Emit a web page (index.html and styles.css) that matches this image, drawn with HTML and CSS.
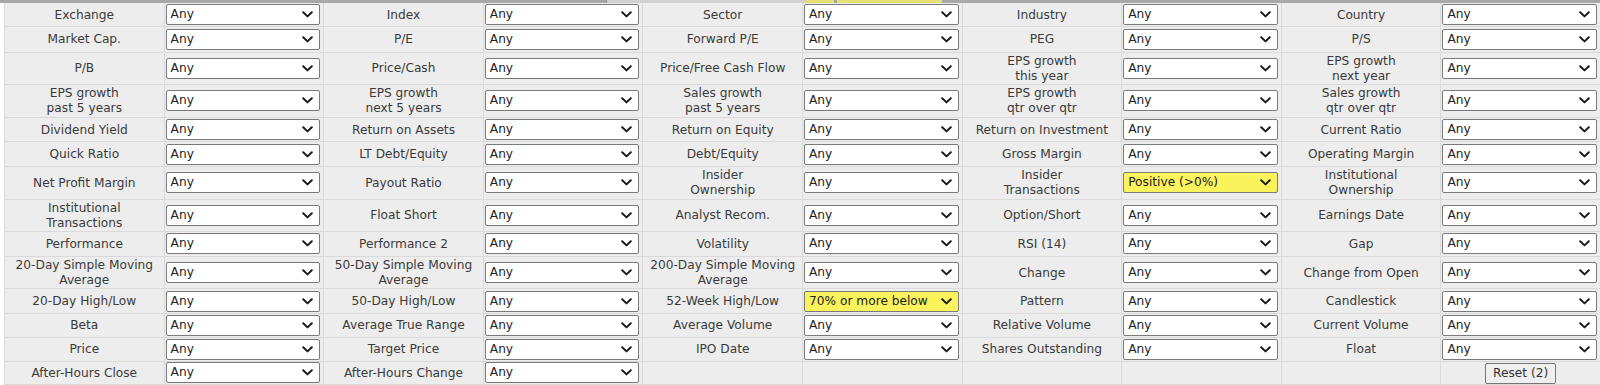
FILE: index.html
```html
<!DOCTYPE html>
<html>
<head>
<meta charset="utf-8">
<link rel="stylesheet" href="styles.css">
</head>
<body>
<svg width="0" height="0" class="defs" aria-hidden="true">
  <defs>
    <symbol id="chev" viewBox="0 0 11 7">
      <path d="M1.2 1.3 L5.5 5.4 L9.8 1.3" fill="none" stroke="#1a1a1a" stroke-width="2" stroke-linecap="round" stroke-linejoin="round"/>
    </symbol>
  </defs>
</svg>
<div class="tabs-edge">
  <div class="seg seg-a"></div>
  <div class="seg seg-b"></div>
  <div class="seg seg-c"></div>
  <div class="seg seg-d"></div>
  <div class="seg seg-e"></div>
</div>
<div class="filters">
  <div class="lbl">Exchange</div><div class="sel"><div class="dd"><span>Any</span><svg class="chev"><use href="#chev"/></svg></div></div>
  <div class="lbl">Index</div><div class="sel"><div class="dd"><span>Any</span><svg class="chev"><use href="#chev"/></svg></div></div>
  <div class="lbl">Sector</div><div class="sel"><div class="dd"><span>Any</span><svg class="chev"><use href="#chev"/></svg></div></div>
  <div class="lbl">Industry</div><div class="sel"><div class="dd"><span>Any</span><svg class="chev"><use href="#chev"/></svg></div></div>
  <div class="lbl">Country</div><div class="sel"><div class="dd"><span>Any</span><svg class="chev"><use href="#chev"/></svg></div></div>

  <div class="lbl">Market Cap.</div><div class="sel"><div class="dd"><span>Any</span><svg class="chev"><use href="#chev"/></svg></div></div>
  <div class="lbl">P/E</div><div class="sel"><div class="dd"><span>Any</span><svg class="chev"><use href="#chev"/></svg></div></div>
  <div class="lbl">Forward P/E</div><div class="sel"><div class="dd"><span>Any</span><svg class="chev"><use href="#chev"/></svg></div></div>
  <div class="lbl">PEG</div><div class="sel"><div class="dd"><span>Any</span><svg class="chev"><use href="#chev"/></svg></div></div>
  <div class="lbl">P/S</div><div class="sel"><div class="dd"><span>Any</span><svg class="chev"><use href="#chev"/></svg></div></div>

  <div class="lbl">P/B</div><div class="sel"><div class="dd"><span>Any</span><svg class="chev"><use href="#chev"/></svg></div></div>
  <div class="lbl">Price/Cash</div><div class="sel"><div class="dd"><span>Any</span><svg class="chev"><use href="#chev"/></svg></div></div>
  <div class="lbl">Price/Free Cash Flow</div><div class="sel"><div class="dd"><span>Any</span><svg class="chev"><use href="#chev"/></svg></div></div>
  <div class="lbl">EPS growth<br>this year</div><div class="sel"><div class="dd"><span>Any</span><svg class="chev"><use href="#chev"/></svg></div></div>
  <div class="lbl">EPS growth<br>next year</div><div class="sel"><div class="dd"><span>Any</span><svg class="chev"><use href="#chev"/></svg></div></div>

  <div class="lbl">EPS growth<br>past 5 years</div><div class="sel"><div class="dd"><span>Any</span><svg class="chev"><use href="#chev"/></svg></div></div>
  <div class="lbl">EPS growth<br>next 5 years</div><div class="sel"><div class="dd"><span>Any</span><svg class="chev"><use href="#chev"/></svg></div></div>
  <div class="lbl">Sales growth<br>past 5 years</div><div class="sel"><div class="dd"><span>Any</span><svg class="chev"><use href="#chev"/></svg></div></div>
  <div class="lbl">EPS growth<br>qtr over qtr</div><div class="sel"><div class="dd"><span>Any</span><svg class="chev"><use href="#chev"/></svg></div></div>
  <div class="lbl">Sales growth<br>qtr over qtr</div><div class="sel"><div class="dd"><span>Any</span><svg class="chev"><use href="#chev"/></svg></div></div>

  <div class="lbl">Dividend Yield</div><div class="sel"><div class="dd"><span>Any</span><svg class="chev"><use href="#chev"/></svg></div></div>
  <div class="lbl">Return on Assets</div><div class="sel"><div class="dd"><span>Any</span><svg class="chev"><use href="#chev"/></svg></div></div>
  <div class="lbl">Return on Equity</div><div class="sel"><div class="dd"><span>Any</span><svg class="chev"><use href="#chev"/></svg></div></div>
  <div class="lbl">Return on Investment</div><div class="sel"><div class="dd"><span>Any</span><svg class="chev"><use href="#chev"/></svg></div></div>
  <div class="lbl">Current Ratio</div><div class="sel"><div class="dd"><span>Any</span><svg class="chev"><use href="#chev"/></svg></div></div>

  <div class="lbl">Quick Ratio</div><div class="sel"><div class="dd"><span>Any</span><svg class="chev"><use href="#chev"/></svg></div></div>
  <div class="lbl">LT Debt/Equity</div><div class="sel"><div class="dd"><span>Any</span><svg class="chev"><use href="#chev"/></svg></div></div>
  <div class="lbl">Debt/Equity</div><div class="sel"><div class="dd"><span>Any</span><svg class="chev"><use href="#chev"/></svg></div></div>
  <div class="lbl">Gross Margin</div><div class="sel"><div class="dd"><span>Any</span><svg class="chev"><use href="#chev"/></svg></div></div>
  <div class="lbl">Operating Margin</div><div class="sel"><div class="dd"><span>Any</span><svg class="chev"><use href="#chev"/></svg></div></div>

  <div class="lbl">Net Profit Margin</div><div class="sel"><div class="dd"><span>Any</span><svg class="chev"><use href="#chev"/></svg></div></div>
  <div class="lbl">Payout Ratio</div><div class="sel"><div class="dd"><span>Any</span><svg class="chev"><use href="#chev"/></svg></div></div>
  <div class="lbl">Insider<br>Ownership</div><div class="sel"><div class="dd"><span>Any</span><svg class="chev"><use href="#chev"/></svg></div></div>
  <div class="lbl">Insider<br>Transactions</div><div class="sel"><div class="dd active"><span>Positive (&gt;0%)</span><svg class="chev"><use href="#chev"/></svg></div></div>
  <div class="lbl">Institutional<br>Ownership</div><div class="sel"><div class="dd"><span>Any</span><svg class="chev"><use href="#chev"/></svg></div></div>

  <div class="lbl">Institutional<br>Transactions</div><div class="sel"><div class="dd"><span>Any</span><svg class="chev"><use href="#chev"/></svg></div></div>
  <div class="lbl">Float Short</div><div class="sel"><div class="dd"><span>Any</span><svg class="chev"><use href="#chev"/></svg></div></div>
  <div class="lbl">Analyst Recom.</div><div class="sel"><div class="dd"><span>Any</span><svg class="chev"><use href="#chev"/></svg></div></div>
  <div class="lbl">Option/Short</div><div class="sel"><div class="dd"><span>Any</span><svg class="chev"><use href="#chev"/></svg></div></div>
  <div class="lbl">Earnings Date</div><div class="sel"><div class="dd"><span>Any</span><svg class="chev"><use href="#chev"/></svg></div></div>

  <div class="lbl">Performance</div><div class="sel"><div class="dd"><span>Any</span><svg class="chev"><use href="#chev"/></svg></div></div>
  <div class="lbl">Performance 2</div><div class="sel"><div class="dd"><span>Any</span><svg class="chev"><use href="#chev"/></svg></div></div>
  <div class="lbl">Volatility</div><div class="sel"><div class="dd"><span>Any</span><svg class="chev"><use href="#chev"/></svg></div></div>
  <div class="lbl">RSI (14)</div><div class="sel"><div class="dd"><span>Any</span><svg class="chev"><use href="#chev"/></svg></div></div>
  <div class="lbl">Gap</div><div class="sel"><div class="dd"><span>Any</span><svg class="chev"><use href="#chev"/></svg></div></div>

  <div class="lbl">20-Day Simple Moving<br>Average</div><div class="sel"><div class="dd"><span>Any</span><svg class="chev"><use href="#chev"/></svg></div></div>
  <div class="lbl">50-Day Simple Moving<br>Average</div><div class="sel"><div class="dd"><span>Any</span><svg class="chev"><use href="#chev"/></svg></div></div>
  <div class="lbl">200-Day Simple Moving<br>Average</div><div class="sel"><div class="dd"><span>Any</span><svg class="chev"><use href="#chev"/></svg></div></div>
  <div class="lbl">Change</div><div class="sel"><div class="dd"><span>Any</span><svg class="chev"><use href="#chev"/></svg></div></div>
  <div class="lbl">Change from Open</div><div class="sel"><div class="dd"><span>Any</span><svg class="chev"><use href="#chev"/></svg></div></div>

  <div class="lbl">20-Day High/Low</div><div class="sel"><div class="dd"><span>Any</span><svg class="chev"><use href="#chev"/></svg></div></div>
  <div class="lbl">50-Day High/Low</div><div class="sel"><div class="dd"><span>Any</span><svg class="chev"><use href="#chev"/></svg></div></div>
  <div class="lbl">52-Week High/Low</div><div class="sel"><div class="dd active"><span>70% or more below</span><svg class="chev"><use href="#chev"/></svg></div></div>
  <div class="lbl">Pattern</div><div class="sel"><div class="dd"><span>Any</span><svg class="chev"><use href="#chev"/></svg></div></div>
  <div class="lbl">Candlestick</div><div class="sel"><div class="dd"><span>Any</span><svg class="chev"><use href="#chev"/></svg></div></div>

  <div class="lbl">Beta</div><div class="sel"><div class="dd"><span>Any</span><svg class="chev"><use href="#chev"/></svg></div></div>
  <div class="lbl">Average True Range</div><div class="sel"><div class="dd"><span>Any</span><svg class="chev"><use href="#chev"/></svg></div></div>
  <div class="lbl">Average Volume</div><div class="sel"><div class="dd"><span>Any</span><svg class="chev"><use href="#chev"/></svg></div></div>
  <div class="lbl">Relative Volume</div><div class="sel"><div class="dd"><span>Any</span><svg class="chev"><use href="#chev"/></svg></div></div>
  <div class="lbl">Current Volume</div><div class="sel"><div class="dd"><span>Any</span><svg class="chev"><use href="#chev"/></svg></div></div>

  <div class="lbl">Price</div><div class="sel"><div class="dd"><span>Any</span><svg class="chev"><use href="#chev"/></svg></div></div>
  <div class="lbl">Target Price</div><div class="sel"><div class="dd"><span>Any</span><svg class="chev"><use href="#chev"/></svg></div></div>
  <div class="lbl">IPO Date</div><div class="sel"><div class="dd"><span>Any</span><svg class="chev"><use href="#chev"/></svg></div></div>
  <div class="lbl">Shares Outstanding</div><div class="sel"><div class="dd"><span>Any</span><svg class="chev"><use href="#chev"/></svg></div></div>
  <div class="lbl">Float</div><div class="sel"><div class="dd"><span>Any</span><svg class="chev"><use href="#chev"/></svg></div></div>

  <div class="lbl">After-Hours Close</div><div class="sel"><div class="dd"><span>Any</span><svg class="chev"><use href="#chev"/></svg></div></div>
  <div class="lbl">After-Hours Change</div><div class="sel"><div class="dd"><span>Any</span><svg class="chev"><use href="#chev"/></svg></div></div>
  <div class="lbl"></div><div class="sel"></div>
  <div class="lbl"></div><div class="sel"></div>
  <div class="lbl"></div><div class="sel center"><button class="reset">Reset (2)</button></div>
</div>
</body>
</html>
```

FILE: styles.css
```css
html, body {
  margin: 0;
  padding: 0;
  background: #ffffff;
}

body {
  width: 1600px;
  height: 385px;
  overflow: hidden;
  font-family: "DejaVu Sans", Verdana, sans-serif;
  font-size: 12.2px;
  color: #333333;
}

.defs {
  display: block;
  width: 0;
  height: 0;
  overflow: hidden;
}

.tabs-edge {
  display: flex;
  height: 3px;
  background: #a8a8a8;
}

.seg { height: 3px; }
.seg-a { width: 606px; }
.seg-b { width: 199px; background: #d2d2d2; border-left: 1px solid #8c8c8c; }
.seg-c { width: 28px; background: #e6df72; }
.seg-d { width: 105px; background: #e6df72; margin-left: 3px; }
.seg-e { flex: 1; }

.filters {
  display: grid;
  grid-template-columns: repeat(10, 1fr);
  grid-template-rows: 23px 24.6px 31.6px 31.6px 23.6px 23.6px 31.6px 31.6px 23.6px 31.6px 23.6px 22.8px 22.8px 22.8px;
  column-gap: 1px;
  row-gap: 1px;
  margin-left: 4px;
  padding: 0 0 1px 1px;
  background: #dadada;
}

.lbl {
  background: #ededed;
  display: flex;
  align-items: center;
  justify-content: center;
  text-align: center;
  line-height: 15px;
  padding-top: 1px;
  color: #3a3a3a;
}

.sel {
  background: #ededed;
  display: flex;
  align-items: center;
  padding: 0 3px 0 1px;
  min-width: 0;
}

.sel.center {
  justify-content: center;
  padding: 0;
}

.dd {
  flex: 1;
  display: flex;
  align-items: center;
  justify-content: space-between;
  height: 21px;
  box-sizing: border-box;
  padding: 0 6px 0 4px;
  background: #ffffff;
  border: 1px solid #7a7a7a;
  border-radius: 2px;
  color: #222222;
  white-space: nowrap;
}

.dd.active {
  background: #fbf35c;
}

.dd span {
  line-height: 19px;
}

.chev {
  width: 11px;
  height: 7px;
  flex: none;
}

.reset {
  height: 21px;
  padding: 0 7px;
  font-family: "DejaVu Sans", Verdana, sans-serif;
  font-size: 12.2px;
  color: #333333;
  background: #efefef;
  border: 1px solid #767676;
  border-radius: 2px;
  margin: 1px 0 0 0;
}
```
